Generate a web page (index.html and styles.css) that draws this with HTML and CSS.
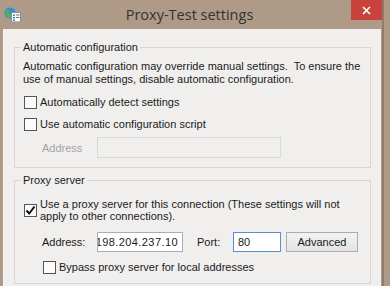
FILE: index.html
```html
<!DOCTYPE html>
<html lang="en">
<head>
  <meta charset="UTF-8">
  <meta name="viewport" content="width=device-width, initial-scale=1.0">
  <title>Proxy-Test settings</title>
  <link rel="stylesheet" href="styles.css">
</head>
<body>

<div class="window">
  <div class="titlebar">
    <svg class="app-icon" width="18" height="16" viewBox="0 0 18 16">
      <circle cx="6" cy="6" r="5.5" fill="#2f8fd0"/>
      <path d="M2 4 C4 2 6 3 5 5 C4 7 6 8 8 7 C9 9 7 11 5 11 C3 10 1 8 2 4 Z" fill="#57b347"/>
      <rect x="7.5" y="5.5" width="9" height="9.5" fill="#fafafa" stroke="#8a9099"/>
      <rect x="9" y="7.5" width="2" height="1.5" fill="#3a7fc4"/>
      <rect x="12" y="7.5" width="3.5" height="1" fill="#6d7680"/>
      <rect x="9" y="10" width="2" height="1.5" fill="#3a7fc4"/>
      <rect x="12" y="10" width="3.5" height="1" fill="#6d7680"/>
      <rect x="9" y="12.5" width="2" height="1.5" fill="#3a7fc4"/>
    </svg>
    <div class="title">Proxy-Test settings</div>
    <div class="close">
      <svg width="9" height="9" viewBox="0 0 9 9">
        <path d="M1 1 L8 8 M8 1 L1 8" stroke="#fff" stroke-width="1.6"/>
      </svg>
    </div>
  </div>

  <div class="client">
    <fieldset class="group auto">
      <legend>Automatic configuration</legend>
      <p class="note">Automatic configuration may override manual settings.&nbsp; To ensure the use of manual settings, disable automatic configuration.</p>

      <label class="check">
        <span class="box"></span>
        <span>Automatically detect settings</span>
      </label>

      <label class="check second">
        <span class="box"></span>
        <span>Use automatic configuration script</span>
      </label>

      <div class="field-row disabled">
        <span class="field-label">Address</span>
        <span class="textbox script-address"></span>
      </div>
    </fieldset>

    <fieldset class="group proxy">
      <legend>Proxy server</legend>

      <label class="check multi">
        <span class="box checked">
          <svg width="11" height="11" viewBox="0 0 11 11">
            <path d="M1.5 5.5 L4.2 8.5 L9.5 1.5" fill="none" stroke="#111" stroke-width="2"/>
          </svg>
        </span>
        <span>Use a proxy server for this connection (These settings will not apply to other connections).</span>
      </label>

      <div class="field-row">
        <span class="field-label">Address:</span>
        <span class="textbox address"><span>198.204.237.10</span></span>
        <span class="port-label">Port:</span>
        <span class="textbox port focused">80</span>
        <span class="button">Advanced</span>
      </div>

      <label class="check bypass">
        <span class="box"></span>
        <span>Bypass proxy server for local addresses</span>
      </label>
    </fieldset>
  </div>
</div>

</body>
</html>
```

FILE: styles.css
```css
* {
  box-sizing: border-box;
}

body {
  margin: 0;
  font-family: "Liberation Sans", Arial, sans-serif;
  font-size: 11px;
  color: #1a1a1a;
  background: #ae9a86;
  overflow: hidden;
}

.window {
  width: 390px;
  height: 286px;
  background: linear-gradient(to right, #ae9a86 382px, #8f7b69 382px, #8f7b69 384px, #ae9a86 384px);
}

.titlebar {
  height: 29px;
  display: flex;
  align-items: flex-start;
}

.app-icon {
  margin: 7px 0 0 4px;
}

.title {
  flex: 1;
  text-align: center;
  font-family: "Open Sans", "Noto Sans", sans-serif;
  font-size: 14.5px;
  color: #333;
  padding: 5px 0 0 6px;
}

.close {
  width: 31px;
  height: 20px;
  margin-right: 8px;
  background: #c8433b;
  display: flex;
  align-items: center;
  justify-content: center;
}

.client {
  margin: 0 9px 0 3px;
  height: 257px;
  background: #f0efee;
  padding-top: 11px;
  border-left: 1px solid #f7f6f5;
}

.group {
  margin: 0 10px 0 10px;
  border: 1px solid #d6d6d6;
  padding: 6px 8px 9px 8px;
}

.group legend {
  padding: 0 2px;
  margin-left: -2px;
  line-height: 14px;
}

.proxy {
  margin-top: 5px;
  padding-top: 11px;
}

.note {
  margin: 0;
  line-height: 13px;
}

.check {
  display: flex;
  align-items: center;
  gap: 3px;
  line-height: 13px;
  margin-top: 10px;
}

.check.second {
  margin-top: 9px;
}

.check.multi {
  margin-top: 0;
  line-height: 12px;
}

.check.bypass {
  margin: 9px 0 0 19px;
}

.box {
  flex: none;
  width: 13px;
  height: 13px;
  margin-left: 1px;
  border: 1px solid #555;
  background: #fbfbfb;
  display: flex;
  align-items: center;
  justify-content: center;
}

.field-row {
  display: flex;
  align-items: center;
  height: 21px;
  margin: 6px 0 0 19px;
}

.proxy .field-row {
  height: 20px;
  margin-top: 10px;
}

.field-label {
  width: 55px;
}

.disabled .field-label {
  color: #a3a3a3;
}

.textbox {
  height: 100%;
  border: 1px solid #abadb3;
  background: #fff;
  display: flex;
  align-items: center;
  padding: 0 4px;
}

.script-address {
  width: 184px;
  border-color: #d9d9d9;
  background: #f0efee;
}

.address {
  width: 86px;
  overflow: hidden;
  justify-content: flex-end;
  white-space: nowrap;
  letter-spacing: 0.42px;
}

.port-label {
  margin-left: 14px;
  width: 36px;
}

.port {
  width: 48px;
}

.focused {
  border-color: #5b8fc7;
}

.button {
  margin-left: 5px;
  width: 72px;
  height: 20px;
  border: 1px solid #acacac;
  background: linear-gradient(#f2f2f2, #e4e4e4);
  display: flex;
  align-items: center;
  justify-content: center;
}
```
